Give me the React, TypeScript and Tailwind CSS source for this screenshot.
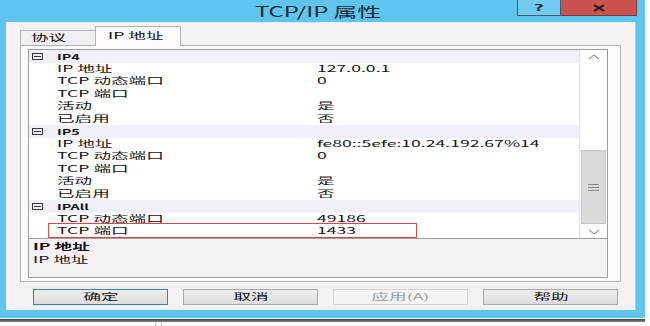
import type { ReactNode } from 'react';

const FONT = '"Noto Sans CJK SC", "Noto Sans", sans-serif';

type Row = { cat?: string; name?: string; value?: string; marked?: boolean };

const ROWS: Row[] = [
    { cat: 'IP4' },
    { name: 'IP 地址', value: '127.0.0.1' },
    { name: 'TCP 动态端口', value: '0' },
    { name: 'TCP 端口', value: '' },
    { name: '活动', value: '是' },
    { name: '已启用', value: '否' },
    { cat: 'IP5' },
    { name: 'IP 地址', value: 'fe80::5efe:10.24.192.67%14' },
    { name: 'TCP 动态端口', value: '0' },
    { name: 'TCP 端口', value: '' },
    { name: '活动', value: '是' },
    { name: '已启用', value: '否' },
    { cat: 'IPAll' },
    { name: 'TCP 动态端口', value: '49186' },
    { name: 'TCP 端口', value: '1433', marked: true },
];

// the screenshot is stretched sideways and squashed a little, so text is scaled to match
function Wide({ children, center }: { children: ReactNode; center?: boolean }) {
    return (
        <span
            className={`inline-block whitespace-nowrap scale-x-[1.76] scale-y-[0.86] ${
                center ? 'origin-center' : 'origin-left'
            }`}
        >
            {children}
        </span>
    );
}

function Chevron({ up }: { up?: boolean }) {
    return (
        <svg width="12" height="6" viewBox="0 0 12 6" className="text-[#6f6f6f]">
            <polyline
                points={up ? '1,5 6,1 11,5' : '1,1 6,5 11,1'}
                fill="none"
                stroke="currentColor"
                strokeWidth="1"
            />
        </svg>
    );
}

function Button({ label, primary, disabled }: { label: string; primary?: boolean; disabled?: boolean }) {
    return (
        <div
            className={`w-[135px] h-[16px] flex items-center justify-center border text-[10px] leading-none ${
                primary
                    ? 'border-[#3f80b4] bg-gradient-to-b from-[#eeeeee] to-[#dddddd] text-[#111]'
                    : disabled
                      ? 'border-[#d3d3d3] bg-[#f4f4f4] text-[#9c9c9c]'
                      : 'border-[#a9a9a9] bg-gradient-to-b from-[#eeeeee] to-[#dcdcdc] text-[#111]'
            }`}
        >
            <Wide center>{label}</Wide>
        </div>
    );
}

export default function App() {
    return (
        <div className="w-[650px] h-[326px] bg-white overflow-hidden" style={{ fontFamily: FONT }}>
            <div className="w-[645px] h-[318px] bg-[#5fc5ee] flex flex-col">
                {/* Title bar */}
                <div className="h-[22px] flex items-start shrink-0">
                    <div className="pl-[255px] h-[22px] flex items-center text-[14px] text-[#1b2a33]">
                        <span className="inline-block whitespace-nowrap origin-left scale-x-[1.7]">TCP/IP 属性</span>
                    </div>
                    <div className="ml-auto mr-[8px] flex">
                        <div className="w-[44px] h-[16px] border-x border-b border-[#4a5a64] bg-[#6fcbf0] flex items-center justify-center text-[11px] font-bold text-[#1a1a1a] leading-none">
                            <Wide center>?</Wide>
                        </div>
                        <div className="w-[76px] h-[16px] border-b border-r border-[#7a3a38] bg-[#c9524f] flex items-center justify-center">
                            <svg width="14" height="8" viewBox="0 0 14 8">
                                <path d="M2 1 L12 7 M12 1 L2 7" stroke="#1a1a1a" strokeWidth="2" />
                            </svg>
                        </div>
                    </div>
                </div>

                {/* Client area */}
                <div className="flex-1 ml-[6px] mr-[9px] mb-[8px] bg-[#f4f2f5] border-r border-[#b8c7d0] px-[14px] pt-[4px] flex flex-col">
                    {/* Tabs */}
                    <div className="h-[19px] flex items-end shrink-0">
                        <div className="w-[75px] h-[15px] border-l border-t border-[#b4b4b4] bg-[#f0eff1] pl-[10px] text-[10px] leading-[14px] text-[#111]">
                            <Wide>协议</Wide>
                        </div>
                        <div className="relative z-10 -mb-px w-[86px] h-[20px] border-x border-t border-[#b4b4b4] bg-[#fafafa] pl-[12px] pt-[2px] text-[10px] leading-[14px] text-[#111]">
                            <Wide>IP 地址</Wide>
                        </div>
                    </div>

                    {/* Tab pane */}
                    <div className="h-[237px] border border-[#b4b4b4] bg-[#fafafa] pl-[7px] pr-[12px] pt-[3px] pb-[3px] flex flex-col">
                        {/* Property grid */}
                        <div className="h-[190px] border border-[#9d9d9d] bg-white flex">
                            <div className="flex-1 flex flex-col text-[10px] text-[#141414]">
                                {ROWS.map((row, i) =>
                                    row.cat ? (
                                        <div key={i} className="h-[12.5px] flex items-center bg-[#eff0f8] leading-none">
                                            <div className="w-[28px] pl-[3px] flex items-center">
                                                <div className="w-[11px] h-[7px] border border-[#3a3a3a] flex items-center justify-center">
                                                    <div className="w-[7px] h-px bg-[#3a3a3a]" />
                                                </div>
                                            </div>
                                            <span className="inline-block whitespace-nowrap origin-left scale-x-[1.6] scale-y-[0.9] font-bold text-[9px]">
                                                {row.cat}
                                            </span>
                                        </div>
                                    ) : (
                                        <div key={i} className="relative h-[12.5px] flex items-center leading-none">
                                            <div className="w-[288px] pl-[28px] shrink-0">
                                                <Wide>{row.name}</Wide>
                                            </div>
                                            <div>
                                                <Wide>{row.value}</Wide>
                                            </div>
                                            {row.marked && (
                                                <div className="absolute -top-[2px] left-[19px] w-[369px] h-[15px] border-[1.5px] border-[#d34a48]" />
                                            )}
                                        </div>
                                    ),
                                )}
                            </div>
                            {/* Scrollbar */}
                            <div className="w-[28px] border-l border-[#e4e4e4] bg-white flex flex-col shrink-0">
                                <div className="h-[13px] flex items-center justify-center">
                                    <Chevron up />
                                </div>
                                <div className="h-[87px]" />
                                <div className="h-[74px] mx-px bg-[#dadada] border border-[#c6c6c6] flex flex-col items-center justify-center gap-[2px]">
                                    <div className="w-[11px] h-px bg-[#8a8a8a]" />
                                    <div className="w-[11px] h-px bg-[#8a8a8a]" />
                                    <div className="w-[11px] h-px bg-[#8a8a8a]" />
                                </div>
                                <div className="flex-1" />
                                <div className="h-[13px] flex items-center justify-center">
                                    <Chevron />
                                </div>
                            </div>
                        </div>

                        {/* Description */}
                        <div className="flex-1 border-x border-b border-[#9d9d9d] bg-[#f4f2f5] px-[4px] pt-[1px] text-[10px] leading-[13px] text-[#141414]">
                            <div className="font-bold">
                                <Wide>IP 地址</Wide>
                            </div>
                            <div>
                                <Wide>IP 地址</Wide>
                            </div>
                        </div>
                    </div>

                    {/* Buttons */}
                    <div className="mt-[7px] ml-[13px] flex gap-[15px]">
                        <Button label="确定" primary />
                        <Button label="取消" />
                        <Button label="应用(A)" disabled />
                        <Button label="帮助" />
                    </div>
                </div>
            </div>
            <div className="mt-px w-[645px] h-[3px] bg-gradient-to-b from-[#3c3c3c] to-[#8a8a8a]" />
            <div className="ml-[155px] w-[7px] h-[4px] border-x border-[#bdbdbd]" />
        </div>
    );
}
